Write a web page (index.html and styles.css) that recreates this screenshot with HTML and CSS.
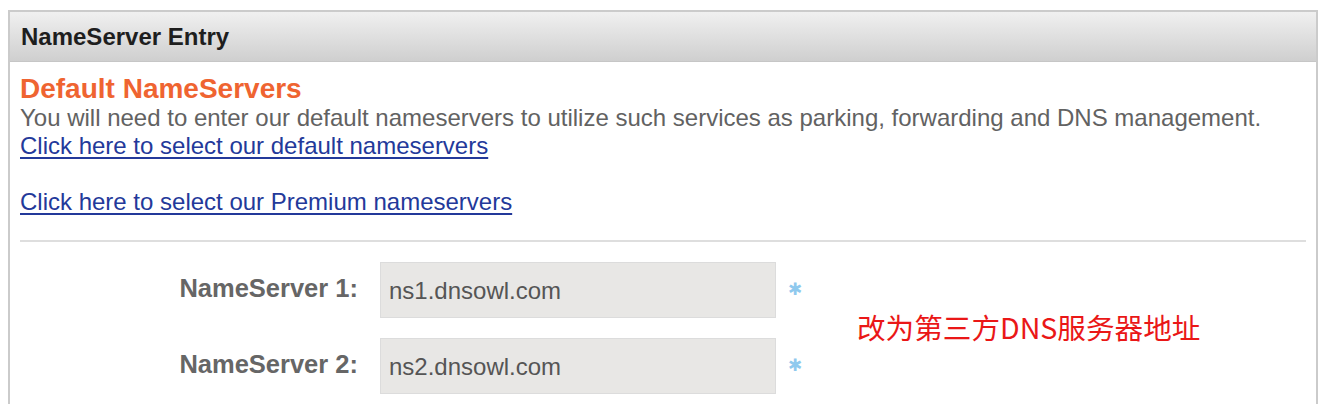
FILE: index.html
```html
<!DOCTYPE html>
<html>
<head>
<meta charset="utf-8">
<link rel="stylesheet" href="styles.css">
</head>
<body>
<div class="panel">
  <div class="panel-head">NameServer Entry</div>
  <div class="panel-body">
    <h2 class="title">Default NameServers</h2>
    <p class="desc">You will need to enter our default nameservers to utilize such services as parking, forwarding and DNS management.</p>
    <a class="link" href="#">Click here to select our default nameservers</a>
    <div class="spacer"></div>
    <a class="link" href="#">Click here to select our Premium nameservers</a>
    <div class="divider"></div>
    <div class="form">
      <div class="row">
        <label class="label">NameServer 1:</label>
        <div class="input">ns1.dnsowl.com</div>
        <span class="req">&#x2731;</span>
      </div>
      <div class="row">
        <label class="label">NameServer 2:</label>
        <div class="input">ns2.dnsowl.com</div>
        <span class="req">&#x2731;</span>
      </div>
      <div class="note">改为第三方DNS服务器地址</div>
    </div>
  </div>
</div>
</body>
</html>
```
FILE: styles.css
```css
html, body {
  margin: 0;
  padding: 0;
  background: #fff;
}
body {
  padding: 10px 8px 0 8px;
  font-family: "Liberation Sans", Arial, sans-serif;
  overflow: hidden;
  height: 404px;
  box-sizing: border-box;
}
.panel {
  width: 1310px;
  border: 2px solid #cbcbcb;
  border-bottom: none;
  height: 394px;
  box-sizing: border-box;
}
.panel-head {
  height: 50px;
  box-sizing: border-box;
  background: linear-gradient(#f0f0f0, #cfcfcf);
  border-bottom: 1px solid #c6c6c6;
  color: #1e1e1e;
  font-weight: bold;
  font-size: 24px;
  line-height: 50px;
  padding-left: 11px;
}
.panel-body {
  padding: 12px 10px 0 10px;
}
.title {
  margin: 0;
  color: #ef6431;
  font-size: 28px;
  line-height: 30px;
  font-weight: bold;
}
.desc {
  margin: 0;
  color: #626262;
  font-size: 24px;
  line-height: 28px;
}
.link {
  display: block;
  width: max-content;
  color: #23399a;
  font-size: 24px;
  line-height: 28px;
  text-decoration: underline;
  text-underline-offset: 3px;
}
.spacer {
  height: 28px;
}
.divider {
  margin-top: 24px;
  height: 2px;
  background: #dedede;
}
.form {
  position: relative;
  padding-top: 20px;
  display: flex;
  flex-direction: column;
  gap: 20px;
}
.row {
  display: flex;
  align-items: center;
}
.label {
  width: 338px;
  text-align: right;
  color: #666;
  font-weight: bold;
  font-size: 25.5px;
  margin-right: 22px;
  position: relative;
  top: -2px;
}
.input {
  width: 396px;
  height: 56px;
  box-sizing: border-box;
  background: #e8e7e5;
  border: 1px solid #dcdcdc;
  color: #555;
  font-size: 24px;
  line-height: 56px;
  padding-left: 8px;
}
.req {
  color: #8fc9ee;
  font-size: 17px;
  margin-left: 12px;
  position: relative;
  top: -1px;
}
.note {
  position: absolute;
  left: 837px;
  top: 65px;
  color: #ea1717;
  font-family: "Noto Sans CJK SC", sans-serif;
  font-size: 28.6px;
  line-height: 40px;
}
```
